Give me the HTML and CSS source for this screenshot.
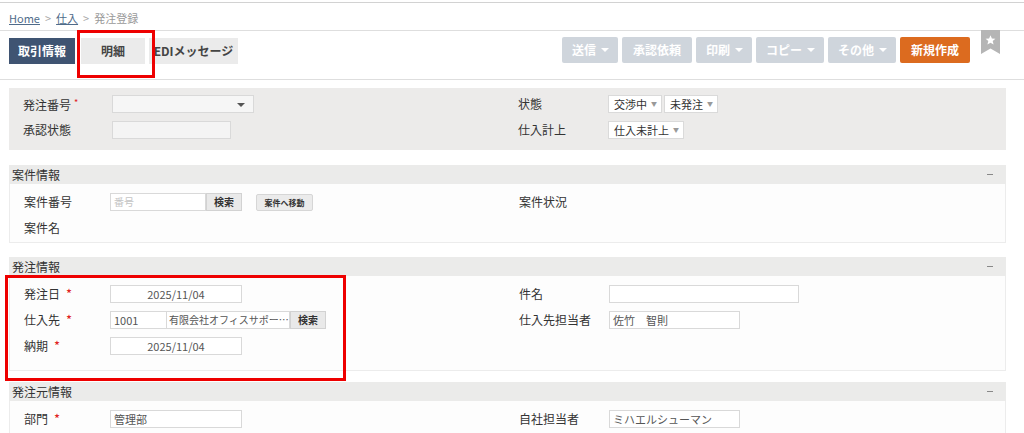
FILE: index.html
```html
<!DOCTYPE html>
<html lang="ja">
<head>
<meta charset="utf-8">
<title>発注登録</title>
<link rel="stylesheet" href="styles.css">
</head>
<body>
<div class="topline"></div>
<div class="breadcrumb"><a class="crumb-link">Home</a><span class="sep">&gt;</span><a class="crumb-link">仕入</a><span class="sep">&gt;</span><span class="crumb-current">発注登録</span></div>

<div class="toolbar">
  <div class="tabs">
    <div class="tab tab-active tab-w1">取引情報</div>
    <div class="tab tab-w2">明細</div>
    <div class="tab tab-w3">EDIメッセージ</div>
  </div>
  <div class="actions">
    <div class="btn btn-dd">送信<span class="caret"></span></div>
    <div class="btn">承認依頼</div>
    <div class="btn btn-dd">印刷<span class="caret"></span></div>
    <div class="btn btn-dd">コピー<span class="caret"></span></div>
    <div class="btn btn-dd">その他<span class="caret"></span></div>
    <div class="btn btn-primary">新規作成</div>
    <svg class="bookmark" width="19" height="24" viewBox="0 0 19 24">
      <path d="M0 0H19V24L9.5 18.5L0 24Z" fill="#b5b5b5"/>
      <path d="M9.5 5.2L10.9 8.6L14.4 8.8L11.7 11.1L12.6 14.6L9.5 12.7L6.4 14.6L7.3 11.1L4.6 8.8L8.1 8.6Z" fill="#ffffff"/>
    </svg>
  </div>
  <div class="annot annot-tab"></div>
</div>

<div class="main">
  <div class="head-panel">
    <div class="grid">
      <div class="col">
        <div class="row"><span class="label label-head">発注番号<span class="req-small">*</span></span>
          <div class="select-box"><span class="select-arrow"></span></div></div>
        <div class="row"><span class="label label-head">承認状態</span>
          <div class="input input-disabled w-119"></div></div>
      </div>
      <div class="col">
        <div class="row"><span class="label label-right">状態</span>
          <div class="dd">交渉中<span class="dd-arrow">▼</span></div><div class="dd dd-join">未発注<span class="dd-arrow">▼</span></div></div>
        <div class="row"><span class="label label-right">仕入計上</span>
          <div class="dd">仕入未計上<span class="dd-arrow">▼</span></div></div>
      </div>
    </div>
  </div>

  <div class="section sec-anken">
    <div class="sec-head"><span>案件情報</span><span class="minus"></span></div>
    <div class="sec-body body-anken">
      <div class="grid">
        <div class="col">
          <div class="row"><span class="label">案件番号</span>
            <div class="input w-96 placeholder">番号</div><div class="sbtn">検索</div><div class="mbtn">案件へ移動</div></div>
          <div class="row"><span class="label">案件名</span></div>
        </div>
        <div class="col">
          <div class="row"><span class="label label-right">案件状況</span></div>
        </div>
      </div>
    </div>
  </div>

  <div class="section sec-order">
    <div class="sec-head"><span>発注情報</span><span class="minus"></span></div>
    <div class="sec-body body-order">
      <div class="grid">
        <div class="col">
          <div class="row"><span class="label">発注日<span class="req">*</span></span>
            <div class="input w-132 center">2025/11/04</div></div>
          <div class="row"><span class="label">仕入先<span class="req">*</span></span>
            <div class="input w-57">1001</div><div class="input w-123 small">有限会社オフィスサポー…</div><div class="sbtn">検索</div></div>
          <div class="row"><span class="label">納期<span class="req">*</span></span>
            <div class="input w-132 center">2025/11/04</div></div>
        </div>
        <div class="col">
          <div class="row"><span class="label label-right">件名</span>
            <div class="input w-190"></div></div>
          <div class="row"><span class="label label-right">仕入先担当者</span>
            <div class="input w-131">佐竹　智則</div></div>
        </div>
      </div>
    </div>
    <div class="annot annot-order"></div>
  </div>

  <div class="section sec-origin">
    <div class="sec-head"><span>発注元情報</span><span class="minus"></span></div>
    <div class="sec-body body-origin">
      <div class="grid">
        <div class="col">
          <div class="row"><span class="label">部門<span class="req">*</span></span>
            <div class="input w-132">管理部</div></div>
        </div>
        <div class="col">
          <div class="row"><span class="label label-right">自社担当者</span>
            <div class="input w-131">ミハエルシューマン</div></div>
        </div>
      </div>
    </div>
  </div>
</div>
</body>
</html>
```

FILE: styles.css
```css
* { box-sizing: border-box; }
html, body {
  margin: 0;
  padding: 0;
  background: #ffffff;
  font-family: "Noto Sans CJK JP", "Noto Sans", sans-serif;
  color: #333333;
  font-size: 12px;
  overflow: hidden;
}
.topline {
  margin-top: 2px;
  height: 1px;
  background: #d2d2d2;
}
.breadcrumb {
  height: 28px;
  padding: 7px 0 0 9px;
  font-size: 11px;
  line-height: 16px;
  border-bottom: 1px solid #dedede;
  color: #9a9a9a;
}
.crumb-link {
  color: #4f6b8a;
  text-decoration: underline;
}
.sep {
  margin: 0 5px;
  color: #a8a8a8;
}
.crumb-current { color: #9a9a9a; }

.toolbar {
  position: relative;
  height: 49px;
  border-bottom: 1px solid #dedede;
  display: flex;
  justify-content: space-between;
  padding: 0 24px 0 9px;
}
.tabs {
  display: flex;
  gap: 4px;
  padding-top: 7px;
}
.tab {
  height: 26px;
  background: #ebebeb;
  color: #444;
  font-weight: bold;
  font-size: 12px;
  line-height: 26px;
  text-align: center;
}
.tab-active { background: #3f5472; color: #ffffff; }
.tab-w1 { width: 66px; }
.tab-w2 { width: 64px; margin-left: 2px; }
.tab-w3 { width: 89px; }

.actions {
  display: flex;
  gap: 4px;
  align-items: flex-start;
}
.btn {
  margin-top: 6px;
  height: 26px;
  padding: 0 11px;
  border-radius: 2px;
  background: #cfd5dc;
  color: #ffffff;
  font-weight: bold;
  font-size: 12px;
  line-height: 26px;
  display: flex;
  align-items: center;
}
.btn-dd { padding: 0 9px 0 10px; }
.btn-primary { background: #dc6b1f; }
.caret {
  display: inline-block;
  margin-left: 5px;
  width: 0;
  height: 0;
  border-left: 4px solid transparent;
  border-right: 4px solid transparent;
  border-top: 4px solid #ffffff;
}
.bookmark {
  margin-left: 7px;
  margin-top: -1px;
  display: block;
}

.annot {
  position: absolute;
  border: 3px solid #ee0000;
  pointer-events: none;
}
.annot-tab {
  left: 77px;
  top: -1px;
  width: 78px;
  height: 48px;
}

.main {
  padding: 8px 18px 0 9px;
}
.head-panel {
  background: #ecebea;
  padding: 7px 0 11px 14px;
}
.grid {
  display: grid;
  grid-template-columns: 495px 1fr;
}
.col {
  display: flex;
  flex-direction: column;
  gap: 8px;
}
.row {
  height: 18px;
  display: flex;
  align-items: center;
}
.label {
  width: 86px;
  flex: none;
  font-size: 12px;
  line-height: 18px;
  color: #333;
}
.label-head { width: 89px; }
.label-right { width: 90px; }
.req-small {
  color: #e02020;
  font-size: 9px;
  margin-left: 3px;
  vertical-align: 4px;
}
.req {
  color: #e02020;
  margin-left: 6px;
  font-size: 13px;
}
.select-box {
  position: relative;
  width: 142px;
  height: 18px;
  background: #f6f6f6;
  border: 1px solid #d9d9d9;
}
.select-arrow {
  position: absolute;
  right: 8px;
  top: 7px;
  width: 0;
  height: 0;
  border-left: 4px solid transparent;
  border-right: 4px solid transparent;
  border-top: 4px solid #555;
}
.input {
  height: 18px;
  background: #ffffff;
  border: 1px solid #d9d9d9;
  font-size: 11px;
  line-height: 16px;
  padding: 0 3px;
  color: #555;
  white-space: nowrap;
  overflow: hidden;
}
.input-disabled { background: #f4f4f4; }
.center { text-align: center; }
.small { font-size: 10px; padding: 0 2px; }
.placeholder { color: #c4c4c4; font-size: 10px; }
.w-57 { width: 57px; }
.w-96 { width: 96px; }
.w-119 { width: 119px; }
.w-123 { width: 123px; border-left: none; }
.w-131 { width: 131px; }
.w-132 { width: 132px; }
.w-190 { width: 190px; }

.dd {
  height: 18px;
  background: #ffffff;
  border: 1px solid #dadada;
  font-size: 11px;
  line-height: 16px;
  padding: 0 4px 0 5px;
  color: #333;
  display: flex;
  align-items: center;
}
.dd-join { margin-left: 2px; }
.dd-arrow {
  font-size: 6px;
  color: #999;
  margin-left: 4px;
}
.sbtn {
  height: 18px;
  width: 36px;
  background: #e9e9e9;
  border: 1px solid #d2d2d2;
  font-size: 10px;
  font-weight: bold;
  line-height: 16px;
  text-align: center;
  color: #333;
}
.mbtn {
  margin-left: 14px;
  height: 17px;
  width: 57px;
  background: #ebebeb;
  border: 1px solid #d6d6d6;
  border-radius: 2px;
  font-size: 8px;
  font-weight: bold;
  line-height: 15px;
  text-align: center;
  color: #333;
}

.section { position: relative; }
.sec-anken { margin-top: 15px; }
.sec-order { margin-top: 14px; }
.sec-origin { margin-top: 11px; }
.sec-head {
  height: 19px;
  background: #ebebea;
  padding: 0 13px 0 3px;
  font-size: 12px;
  line-height: 19px;
  color: #333;
  display: flex;
  justify-content: space-between;
  align-items: center;
}
.minus {
  width: 6px;
  height: 1px;
  background: #888;
}
.sec-body {
  background: #fdfdfd;
  border: 1px solid #ececec;
  border-top: none;
  padding: 9px 0 0 14px;
}
.body-anken { height: 59px; }
.body-order { height: 95px; }
.body-origin { height: 40px; }

.annot-order {
  left: -4px;
  top: 18px;
  width: 341px;
  height: 106px;
}
```
